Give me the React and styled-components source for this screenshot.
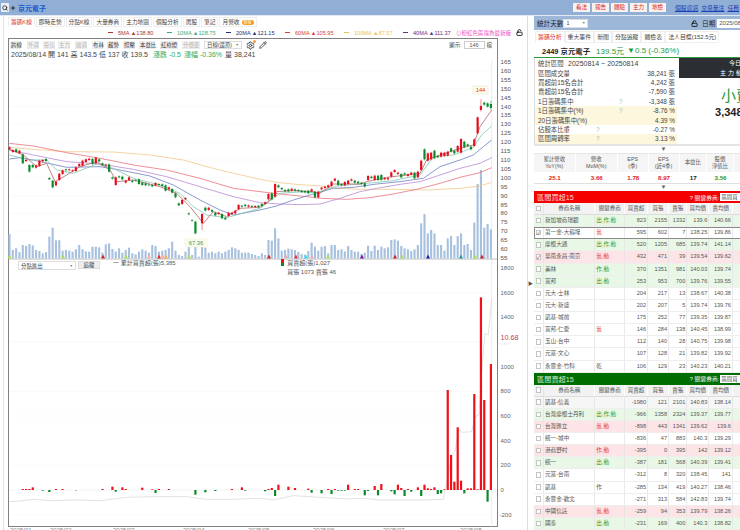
import React from 'react';
import styled, { createGlobalStyle } from 'styled-components';
import { Settings, Pencil, LockOpen, Search, Plus } from 'lucide-react';

const GlobalStyle = createGlobalStyle`
  html, body {
    margin: 0;
    padding: 0;
    background: #fff;
    overflow: hidden;
  }
  #root {
    width: 740px;
    height: 530px;
    overflow: hidden;
    font-family: "Liberation Sans", "Noto Sans CJK TC", sans-serif;
    color: #333;
  }
`;

const Page = styled.div`
  width: 740px;
  height: 530px;
  display: flex;
  flex-direction: column;
  overflow: hidden;
`;

const TopBar = styled.div`
  flex: 0 0 15px;
  height: 15px;
  background: #91aed4;
  border-bottom: 1px solid #dfe8f3;
  display: flex;
  align-items: center;
`;
const SearchBox = styled.div`
  width: 8px;
  height: 9px;
  margin-left: 1px;
  background: #e9eef6;
  color: #222;
  display: flex;
  align-items: center;
  justify-content: center;
`;
const PlusMark = styled.div`
  width: 6px;
  margin-left: 1px;
  display: flex;
  color: #111;
`;
const StockTitle = styled.div`
  margin-left: 2px;
  font-size: 7px;
  font-weight: bold;
  color: #1558d0;
`;
const TopActions = styled.div`
  margin-left: auto;
  width: 167px;
  display: flex;
  align-items: center;
  flex-shrink: 0;
`;
const RedButton = styled.div`
  width: 17px;
  height: 9px;
  margin-right: 2px;
  background: #f6f3ef;
  color: #d22;
  font-size: 5.6px;
  line-height: 9px;
  text-align: center;
`;
const TopLink = styled.a`
  margin-left: ${props => props.$gap}px;
  color: #1a3fb8;
  font-size: 5.8px;
  text-decoration: underline;
  white-space: nowrap;
`;

const Body = styled.div`
  flex: 1;
  display: flex;
  min-height: 0;
`;

const LeftPane = styled.div`
  flex: 0 0 527px;
  width: 527px;
  position: relative;
  display: flex;
  flex-direction: column;
  padding-left: 8px;
  box-sizing: border-box;
  &:before {
    content: '';
    position: absolute;
    left: 3px;
    top: 0;
    bottom: 0;
    width: 1px;
    background: #e2e2e2;
  }
`;
const TabRow = styled.div`
  height: 10px;
  margin-top: 1px;
  display: flex;
  align-items: stretch;
  gap: 1px;
`;
const Tab = styled.div`
  padding: 0 ${props => props.$pad ?? 2}px;
  font-size: 5.7px;
  line-height: 10px;
  color: ${props => (props.$active ? '#e03030' : '#444')};
  border: 1px solid #eee;
  border-bottom-color: ${props => (props.$active ? '#fff' : '#eee')};
  white-space: nowrap;
  display: flex;
  align-items: center;
  gap: 2px;
  box-sizing: border-box;
`;
const NewBadge = styled.span`
  background: #f39a1e;
  color: #fff;
  font-size: 4px;
  line-height: 5px;
  padding: 0 2px;
  border-radius: 3px;
`;
const LegendRow = styled.div`
  height: 11px;
  display: flex;
  align-items: center;
  padding-left: 100px;
  width: 515px;
  box-sizing: border-box;
`;
const MaItem = styled.div`
  width: 59px;
  flex-shrink: 0;
  font-size: 5.6px;
  color: ${props => props.$color};
  display: flex;
  align-items: center;
  white-space: nowrap;
`;
const MaDash = styled.span`
  width: 5px;
  height: 1px;
  margin-right: 5px;
  background: ${props => props.$color};
`;
const PinkNote = styled.div`
  margin-left: -6px;
  font-size: 5.5px;
  color: #ec4fc0;
  white-space: nowrap;
`;
const LockIcon = styled.div`
  margin-left: 5px;
  color: #111;
  display: flex;
`;
const ChartFrame = styled.div`
  position: relative;
  width: 490px;
  height: 489px;
  box-sizing: border-box;
  border: 1px solid #808080;
  display: flex;
  flex-direction: column;
`;
const ChartTools = styled.div`
  height: 10px;
  display: flex;
  align-items: center;
  gap: 4px;
  padding-left: 1px;
  padding-right: 5px;
  margin-top: 1px;
`;
const ToolBtn = styled.div`
  width: ${props => props.$w}px;
  height: 8px;
  flex-shrink: 0;
  margin-left: ${props => props.$m}px;
  background: #f5f5f5;
  border: 1px solid #ececec;
  box-sizing: border-box;
  color: ${props => (props.$off ? '#b0b0b0' : '#333')};
  font-size: 5.4px;
  line-height: 6px;
  text-align: center;
  white-space: nowrap;
`;
const FakeSelect = styled.div`
  width: ${props => props.$w}px;
  height: ${props => props.$h ?? 8}px;
  flex-shrink: 0;
  background: #fff;
  border: 1px solid #ddd;
  box-sizing: border-box;
  color: #444;
  font-size: 5.4px;
  display: flex;
  align-items: center;
  justify-content: space-between;
  padding: 0 2px;
  white-space: nowrap;
`;
const Caret = styled.span`
  font-size: 3.5px;
  color: #777;
`;
const ToolIcon = styled.div`
  display: flex;
  flex-shrink: 0;
  margin-left: ${props => props.$gap ?? 0}px;
  color: #444;
`;
const GearIcon = styled(ToolIcon)`
  position: relative;
  &:after {
    content: '';
    position: absolute;
    right: -1px;
    top: -1px;
    width: 3px;
    height: 3px;
    border-radius: 50%;
    background: #f2a33a;
  }
`;
const ShowCount = styled.div`
  margin-left: auto;
  display: flex;
  align-items: center;
  gap: 2px;
  font-size: 5.4px;
  color: #444;
`;
const CountBox = styled.div`
  width: 21px;
  height: 8px;
  border: 1px solid #ccc;
  box-sizing: border-box;
  text-align: center;
  line-height: 6px;
  font-size: 5.4px;
  color: #555;
`;
const InfoLine = styled.div`
  height: 10px;
  padding-left: 2px;
  font-size: 7px;
  line-height: 10px;
  white-space: nowrap;
  color: #444;
  display: flex;
  gap: 3px;
`;
const Up = styled.span`
  color: #2faa5a;
`;
const ChartBody = styled.div`
  position: relative;
  flex: 1;
  min-height: 0;
`;
const ChartSvg = styled.svg`
  display: block;
  overflow: visible;
  position: absolute;
  left: 0;
  top: 0;
`;
const SubBar = styled.div`
  position: absolute;
  left: 9px;
  top: 201px;
  display: flex;
  align-items: flex-start;
  gap: 2px;
`;
const SubButton = styled.div`
  width: 22px;
  height: 8px;
  background: #eee;
  border: 1px solid #ddd;
  box-sizing: border-box;
  font-size: 5.4px;
  line-height: 6px;
  text-align: center;
  color: #333;
`;
const SubLegend = styled.div`
  margin-left: ${props => props.$gap}px;
  margin-top: -2px;
  font-size: 6px;
  line-height: 8.5px;
  color: #555;
  white-space: nowrap;
`;
const LegendLine = styled.div`
  margin-left: 6.5px;
`;
const LegendMark = styled.span`
  display: inline-block;
  width: 3px;
  height: 7px;
  margin-right: 3.5px;
  vertical-align: -1px;
  background: linear-gradient(#e11 0 55%, #0a8a2a 55% 100%);
`;
const DateStrip = styled.div`
  height: 3px;
  overflow: hidden;
  display: flex;
  padding-left: 2px;
`;
const DateLabel = styled.span`
  flex: 0 0 ${props => props.$w}px;
  font-size: 6px;
  line-height: 6px;
  color: #888;
`;

const Splitter = styled.div`
  flex: 0 0 5px;
  border-left: 1px solid #ddd;
  box-sizing: border-box;
  padding-top: 264px;
  font-size: 5px;
  line-height: 6px;
  color: #555;
`;

const RightPane = styled.div`
  flex: 0 0 260px;
  width: 260px;
  display: flex;
  flex-direction: column;
  margin-left: 1px;
`;
const ControlBar = styled.div`
  height: 14px;
  background: #9db7d9;
  display: flex;
  align-items: center;
  padding-left: 3px;
  font-size: 6.6px;
  color: #223;
`;
const DateInput = styled.div`
  width: 34px;
  height: 9px;
  margin-left: 2px;
  background: #fff;
  font-size: 6px;
  line-height: 9px;
  padding-left: 2px;
  color: #555;
  white-space: nowrap;
`;
const RightTabs = styled.div`
  height: 12px;
  margin-top: 1px;
  display: flex;
  padding-left: 1px;
`;
const RightTab = styled.div`
  padding: 0 2px;
  font-size: 5.9px;
  line-height: 11px;
  color: ${props => (props.$active ? '#e03030' : '#444')};
  border: 1px solid #eee;
  border-bottom-color: ${props => (props.$active ? '#fff' : '#eee')};
  white-space: nowrap;
`;
const StockHead = styled.div`
  height: 14px;
  padding-left: 8px;
  display: flex;
  align-items: center;
  border-bottom: 1px solid #2c9a3a;
  font-size: 7.4px;
  white-space: nowrap;
`;
const StockName = styled.span`
  font-weight: bold;
  color: #222;
  margin-right: 6px;
`;
const StockPrice = styled.span`
  color: #1d9a3c;
  font-size: 8px;
  margin-right: 3px;
`;
const StatsWrap = styled.div`
  display: flex;
  height: 86px;
  border-bottom: 2px solid #e4e4e4;
`;
const StatsTable = styled.div`
  width: 143px;
  flex-shrink: 0;
  padding-top: 1px;
  border-left: 1px solid #ddd;
  box-sizing: border-box;
`;
const StatRow = styled.div`
  height: 9.4px;
  display: flex;
  align-items: center;
  padding: 0 2px 0 3px;
  font-size: 6.4px;
  color: #444;
  white-space: nowrap;
  background: ${props => (props.$hi ? '#fdf7dd' : 'transparent')};
`;
const StatLabel = styled.span`
  flex: 0 0 ${props => props.$w}px;
`;
const StatDate = styled.span`
  font-size: 7px;
`;
const Help = styled.span`
  color: #9bb;
`;
const StatValue = styled.span`
  margin-left: auto;
`;
const SideSummary = styled.div`
  margin-left: 2px;
  flex: 1;
  display: flex;
  flex-direction: column;
`;
const SideHead = styled.div`
  height: 20px;
  background: #2b2f33;
  color: #fff;
  font-size: 6px;
  line-height: 10px;
  white-space: nowrap;
  padding-left: 41px;
`;
const SideHeadTop = styled.div`
  padding-left: 9px;
`;
const SideHeadBottom = styled.div`
  letter-spacing: 2px;
`;
const BigWord = styled.div`
  margin-top: 9px;
  padding-left: 42px;
  font-size: 15px;
  line-height: 17px;
  color: #1d9a3c;
  white-space: nowrap;
`;
const BigNum = styled.div`
  margin-top: 1px;
  padding-left: 36px;
  font-size: 11px;
  font-weight: bold;
  line-height: 14px;
  color: #222;
  white-space: nowrap;
`;
const ArrowRow = styled.div`
  height: 6px;
  margin-bottom: 1px;
  text-align: center;
  font-size: 6px;
  line-height: 6px;
  color: #666;
  width: 259px;
`;
const MetricsTable = styled.div`
  display: grid;
  grid-template-columns: 41.5px 42.5px 30.5px 31px 27.5px 27px 40px;
  grid-template-rows: 19px 11px;
  border-bottom: 1px solid #e0e0e0;
  width: 240px;
`;
const MetricHead = styled.div`
  background: #f5f5f5;
  border-right: 1px solid #fff;
  border-top: 1px solid #e6e6e6;
  font-size: 5.4px;
  line-height: 7.5px;
  color: #555;
  text-align: center;
  display: flex;
  align-items: center;
  justify-content: center;
`;
const MetricValue = styled.div`
  font-size: 6.2px;
  font-weight: bold;
  line-height: 11px;
  text-align: center;
  color: ${props => props.$color};
`;
const Section = styled.div`
  width: 240px;
`;
const SectionBar = styled.div`
  height: 12px;
  background: ${props => props.$bg};
  color: ${props => props.$fg};
  display: flex;
  align-items: center;
  padding-left: 3px;
  font-size: 7.2px;
`;
const SectionSide = styled.div`
  margin-left: 116px;
  display: flex;
  align-items: center;
  font-size: 5.8px;
  color: #f5f5f5;
  white-space: nowrap;
`;
const SmallPick = styled.div`
  margin-left: 1px;
  background: #fff;
  color: #555;
  width: 32px;
  height: 8px;
  line-height: 8px;
  padding-left: 1px;
  font-size: 5.4px;
`;
const gridCols = '10px 51.3px 29.7px 23px 21px 18.3px 22px 23.7px 41px';
const HeadRow = styled.div`
  height: 12px;
  display: grid;
  grid-template-columns: ${gridCols};
  background: #f2f2f2;
  border-bottom: 1px solid #ddd;
  box-sizing: border-box;
`;
const HeadCell = styled.div`
  font-size: 5.5px;
  line-height: 11px;
  color: #555;
  text-align: center;
  border-right: 1px solid #fff;
  white-space: nowrap;
  overflow: hidden;
  display: flex;
  align-items: center;
  justify-content: center;
`;
const DataRow = styled.div`
  height: 12.13px;
  display: grid;
  grid-template-columns: ${gridCols};
  box-sizing: border-box;
  border-bottom: 1px solid #eee;
  background: ${props => ({ g: '#e9f8e6', r: '#fde4e6', s: '#f6f6f6', w: '#fff' }[props.$tone])};
  outline: ${props => (props.$picked ? '1px solid #8a8a8a' : 'none')};
  outline-offset: -1px;
`;
const Cell = styled.div`
  font-size: 5.6px;
  line-height: 11px;
  color: ${props => props.$color || '#555'};
  text-align: ${props => props.$align || 'right'};
  padding: 0 1px;
  white-space: nowrap;
  overflow: hidden;
  border-right: 1px solid rgba(225, 225, 225, 0.7);
`;
const BoxCell = styled.div`
  display: flex;
  align-items: center;
  justify-content: center;
  border-right: 1px solid rgba(225, 225, 225, 0.7);
`;
const Check = styled.div`
  width: 5.5px;
  height: 5.5px;
  background: #fff;
  border: 1px solid #c4c4c4;
  box-sizing: border-box;
  font-size: 5px;
  line-height: 4px;
  color: #333;
  text-align: center;
`;

// chart data, y values read off the reference at 3x
const candles = [
  [262,268,'r'],[270,276,'r'],[268,276,'g'],[272,280,'r'],[283,310,'g'],[300,303,'r'],[315,335,'g'],[315,322,'g'],[316,323,'r'],[302,318,'r'],
  [300,304,'r'],[297,303,'g'],[354,358,'g'],[362,382,'g'],[365,376,'r'],[341,360,'r'],[331,342,'r'],[328,331,'g'],[328,331,'r'],[331,334,'r'],
  [322,333,'r'],[312,318,'r'],[302,317,'r'],[298,306,'r'],[296,300,'r'],[297,312,'g'],[293,310,'r'],[298,304,'g'],[310,315,'g'],[314,317,'r'],
  [313,335,'g'],[352,356,'g'],[352,375,'r'],[349,352,'g'],[350,358,'g'],[362,368,'r'],[352,360,'r'],[362,366,'g'],[360,362,'g'],[358,372,'g'],
  [368,375,'g'],[370,376,'g'],[374,376,'g'],[375,379,'g'],[369,376,'r'],[372,375,'g'],[373,378,'g'],[376,392,'g'],[382,388,'r'],[387,398,'g'],
  [400,412,'g'],[430,436,'g'],[420,432,'r'],[414,418,'r'],[460,463,'g'],[480,482,'g'],[485,520,'g'],null,[462,490,'r',460,510],[443,452,'g'],
  [443,450,'r'],[450,455,'g'],[458,466,'g'],[458,462,'r'],[462,475,'g'],[474,478,'g'],[458,468,'r'],[458,462,'r'],[452,460,'r'],[435,448,'r'],
  [437,440,'g'],[434,438,'g'],[436,440,'r'],[438,441,'g'],[438,441,'r'],[437,441,'g'],[432,438,'g'],[427,432,'r'],[402,418,'r'],[400,418,'g'],
  [372,410,'r'],[376,382,'g'],[384,388,'g'],[390,394,'g'],[388,394,'g'],[386,392,'r'],[388,392,'g'],[390,393,'g'],[392,396,'g'],[393,397,'g'],
  [392,400,'g'],[388,394,'r'],[395,412,'g'],[395,412,'r'],[383,388,'r'],[380,384,'r'],[376,382,'r'],[365,378,'r'],[356,362,'r'],[362,375,'g'],
  [372,376,'g'],[366,376,'r'],[362,372,'r'],[358,362,'r'],[362,368,'g'],[365,370,'g'],[368,372,'g'],[370,380,'g'],[348,360,'r'],[350,354,'g'],
  [347,360,'r'],[347,360,'g'],[345,360,'g'],[354,358,'r'],[354,358,'r'],[337,350,'r'],[330,336,'r'],[338,342,'r'],[342,352,'g'],[340,344,'g'],
  [343,348,'r'],[338,344,'r'],[338,355,'g'],[335,352,'r'],[302,330,'r'],[268,298,'g'],[280,302,'r'],[278,298,'r'],[272,295,'g'],[288,292,'g'],
  [278,290,'r'],[278,288,'r'],[275,287,'r'],[265,275,'g'],[272,280,'g'],[258,275,'r'],[237,278,'r'],[245,262,'g'],[253,258,'g'],[260,268,'g'],
  [238,258,'r'],[172,220,'r'],[138,150,'r',118,155],[128,134,'g'],[130,140,'g'],[132,144,'g',122,150],
];
const volumes = [
  522,570,565,576,555,558,552,556,570,573,580,576,530,503,541,541,572,570,572,575,
  568,555,568,574,575,560,560,562,578,553,550,567,574,565,578,570,563,580,583,575,
  568,572,578,555,558,575,572,570,565,545,572,585,588,575,550,585,545,590,560,563,
  578,575,580,575,580,575,570,562,565,570,578,578,578,582,585,588,580,585,540,542,
  505,535,572,570,566,568,570,576,582,584,573,548,560,572,560,558,580,555,555,570,
  568,574,558,570,575,575,582,578,557,573,557,570,560,565,562,540,538,542,558,565,
  568,573,568,555,490,462,520,510,520,555,555,572,535,528,555,528,520,555,552,570,
  488,372,330,503,492,508,
];
// [index, height in 3x px]; negative goes under the zero line
const netBars = [
  [4,3],[5,3],[6,3],[7,8],[10,-2],[12,-6],[14,3],[16,3],[20,-1],[28,3],[31,10],[32,-5],[34,8],[35,3],[40,7],[43,2],[44,-9],[45,3],[48,3],
  [56,-14],[59,-7],[62,-3],[67,3],[70,8],[71,-2],[77,-4],[78,3],[79,6],[80,-18],[81,16],[84,10],[86,6],[90,4],[91,-8],[94,-10],[96,3],[97,-12],
  [98,3],[99,-2],[100,-2],[101,-2],[102,16],[104,3],[105,3],[107,-16],[108,-3],[110,12],[111,-16],[112,18],[115,-4],[116,-13],[117,16],[118,6],
  [119,-18],[120,3],[121,-5],[123,8],[124,-18],[125,16],[126,5],[127,3],[128,8],[129,-12],[130,-10],[131,2],[132,300],[133,105],[134,25],[135,188],
  [136,28],[137,-10],[138,5],[139,5],[140,288],[141,2],[142,578],[143,270],[144,-35],[145,378],
];
const maLines = [
  { color: '#f3c98a', a: [[28,262],[100,268],[200,275],[340,276],[450,285],[550,300],[650,328],[780,358]], b: [[60,368],[120,374],[185,378],[230,385],[300,388],[400,388],[500,390],[600,385],[660,378],[695,367]] },
  { color: '#e8747c', a: [[28,250],[100,258],[200,278],[300,295],[400,315],[500,330],[600,355],[700,385],[780,395]], b: [[60,402],[120,408],[185,415],[260,418],[330,413],[400,402],[470,388],[540,370],[600,352],[660,338],[695,323]] },
  { color: '#b98ad6', a: [[28,270],[100,285],[200,305],[300,312],[400,328],[500,350],[600,380],[700,410],[780,428]], b: [[60,432],[120,434],[180,432],[240,415],[300,395],[350,385],[420,373],[480,365],[540,345],[600,325],[660,310],[695,293]] },
  { color: '#6f80c4', a: [[28,297],[60,293],[100,300],[200,322],[300,320],[360,330],[450,348],[520,375],[600,420],[660,450],[700,465],[780,450]], b: [[50,438],[100,420],[150,405],[220,385],[280,382],[350,372],[420,365],[490,355],[540,320],[600,300],[640,285],[670,260],[695,240]] },
  { color: '#7fc8b4', a: [[28,285],[90,300],[140,300],[170,330],[220,340],[290,312],[340,325],[400,355],[480,375],[540,400],[580,440],[620,465],[680,473],[780,445]], b: [[60,400],[120,396],[170,398],[230,378],[300,372],[400,362],[480,345],[520,290],[580,285],[640,262],[665,225],[695,198]] },
  { color: '#b5656a', a: [[28,268],[70,285],[110,320],[140,310],[165,365],[200,345],[240,320],[290,305],[330,330],[350,365],[400,360],[480,380],[530,400],[570,440],[610,490],[640,455],[680,470],[720,445],[780,442]], b: [[30,420],[50,395],[100,392],[160,395],[180,400],[220,372],[300,372],[320,365],[380,352],[440,345],[480,340],[500,300],[540,285],[600,265],[640,255],[660,200],[695,150]] },
];
const cumA = [[28,740],[60,738],[100,733],[150,737],[230,735],[300,737],[380,727],[460,725],[560,725],[620,733],[700,733],[780,730]];
const cumB = [[40,735],[100,722],[180,727],[260,732],[310,730],[360,735],[480,735],[550,733],[556,700],[565,660],[575,600],[585,590],[597,520],[605,532],[635,530],[645,485],[657,480],[665,350],[675,235],[685,240],[695,130]];
const markers = [
  [9.5,'#a7e05a'],[63,'#a7e05a'],[103,'#c22'],[126,'#a7e05a'],[149,'#f7b0a8'],[159,'#d33'],[163,'#f7b0a8'],[166,'#f4b050'],[189,'#a7e05a'],
  [269,'#c22'],[286,'#f7a8a8'],[296,'#e33'],[306,'#3de0e8'],[312,'#f7a8a8'],[328,'#a7e05a'],[362,'#7a1a9a'],[395,'#c22'],[402,'#a7e05a'],
  [428,'#1a1aa0'],[461,'#1a9a9a'],[475,'#a7e05a'],[482,'#c22'],
];
const priceTicks = [165,160,155,150,145,140,135,130,125,120,115,110,105,100,95,90,85,80,75,70,65,60,55];
const subTicks = [1800,1600,1400,1000,800,600,400,200,0,-200];
const dates = [['2025/01', 40], ['2025/02', 63], ['2025/03', 70], ['2025/04', 65], ['2025/05', 65], ['2025/06', 70], ['2025/07', 77], ['2025/08', 40]];

const barX = i => 9.5 + 3.32 * i;
const priceY = p => 258 - (p - 55) * 1.782;
const subY = v => 490 - v * 0.1233;
const toLine = (pts, ox, oy) => pts.map(([x, y]) => `${ox + x / 3},${oy + y / 3}`).join(' ');
const maPoints = m => `${toLine(m.a, 0, 60)} ${toLine(m.b, 260, 60)}`;

const MA_LEGEND = [
  ['#a33', '5MA', '138.80'],
  ['#3aaa7a', '10MA', '128.75'],
  ['#23307a', '20MA', '121.15'],
  ['#e03a3a', '60MA', '105.95'],
  ['#e8c060', '100MA', '87.57'],
  ['#6a2a8a', '40MA', '111.37'],
];
// [label, width, extra left margin, greyed out]
const TOOLS = [
  ['跨線', 11, 0], ['外資', 12, 2, 1], ['投信', 12, 0, 1], ['主力', 12, -1, 1], ['融資', 12, 1, 1], ['布林', 11, 1], ['趨勢', 11, 0], ['撐壓', 12, 1],
  ['本益比', 16, 0], ['紅綠燈', 18, 1], ['分價量', 18, 0, 1],
];
const STATS = [
  ['區間成交量', 60, null, '38,241 張', false],
  ['買超前15名合計', 60, null, '4,242 張', false],
  ['賣超前15名合計', 60, null, '-7,590 張', false],
  ['1日籌碼集中', 81, '?', '-3,348 張', false],
  ['1日籌碼集中(%)', 81, '?', '-8.76 %', true],
  ['20日籌碼集中(%)', 81, null, '4.39 %', true],
  ['佔股本比重', 58, '?', '-0.27 %', false],
  ['區間周轉率', 58, '?', '3.13 %', true],
];
const METRICS = [
  [['累計營收', 'YoY(%)'], '25.1', '#e0202a'],
  [['營收', 'MoM(%)'], '3.66', '#e0202a'],
  [['EPS', '(季)'], '1.78', '#e0202a'],
  [['EPS', '(近4季)'], '8.97', '#e0202a'],
  [['本益比'], '17', '#222'],
  [['股價', '淨值比'], '3.56', '#1d9a3c'],
  [['殖利', '率(%)'], '', '#222'],
];
const HEADS = ['券商名稱', '關鍵券商', '買賣超', '買張', '賣張', '買均價', '賣均價', '交'];
const GREEN = '#1d9a3c';
const RED = '#e0303a';
const BUY_ROWS = [
  ['新加坡商瑞銀', '出,作,動', GREEN, 823, 2155, 1332, 139.6, 140.66, 'g'],
  ['第一金-大稻埕', '氪', RED, 595, 602, 7, 138.25, 139.86, 'w', true],
  ['摩根大通', '出,作,動', GREEN, 520, 1205, 685, 139.74, 141.14, 'g'],
  ['華南永昌-南京', '氪,動', RED, 432, 471, 39, 139.54, 139.62, 'r', false, true],
  ['美林', '作,動', GREEN, 370, 1351, 981, 140.03, 139.74, 'g'],
  ['富邦', '出,動', GREEN, 253, 953, 700, 139.76, 139.55, 'g'],
  ['元大-士林', '', GREEN, 204, 217, 13, 138.67, 140.38, 'w'],
  ['元大-新盛', '', GREEN, 202, 207, 5, 139.74, 139.76, 'w'],
  ['凱基-城前', '', GREEN, 175, 252, 77, 139.35, 139.87, 'w'],
  ['富邦-仁愛', '氪', RED, 146, 284, 138, 140.45, 138.99, 'w'],
  ['玉山-台中', '', GREEN, 112, 140, 28, 140.75, 139.98, 'w'],
  ['元富-文心', '', GREEN, 107, 128, 21, 139.82, 139.92, 'w'],
  ['永豐金-竹科', '乾', '#555', 106, 129, 23, 140.23, 140.21, 'w'],
];
const SELL_ROWS = [
  ['凱基-信義', '', GREEN, -1980, 121, 2101, 140.83, 138.14, 's'],
  ['台灣摩根士丹利', '出,作,動', GREEN, -966, 1358, 2324, 139.37, 139.77, 'g'],
  ['台灣匯立', '氪,動', RED, -898, 443, 1341, 139.62, 139.6, 'r'],
  ['統一-城中', '', GREEN, -836, 47, 883, 140.3, 139.29, 'w'],
  ['港商野村', '作,動', RED, -395, 0, 395, 142, 139.12, 'r'],
  ['統一', '出,動', GREEN, -387, 181, 568, 140.39, 139.41, 'g'],
  ['元富-台南', '', GREEN, -312, 8, 320, 138.45, 141, 'w'],
  ['凱基', '作', '#555', -285, 134, 419, 140.27, 138.46, 'w'],
  ['永豐金-歡北', '', GREEN, -271, 313, 584, 142.83, 139.74, 'w'],
  ['中國信託', '氪,動', RED, -259, 94, 353, 139.79, 138.26, 'r'],
  ['國泰', '出,動', GREEN, -231, 169, 400, 140.3, 138.82, 'g'],
];

const KLineChart = () => (
  <ChartSvg width="530" height="467" viewBox="9 60 530 467">
    {priceTicks.filter(p => p % 10 === 0).map(p => (
      <line key={p} x1="9" x2="491" y1={priceY(p)} y2={priceY(p)} stroke="#f6f6f6" strokeWidth="0.6" />
    ))}
    {[1600, 1200, 800, 600, 200, -200].map(v => (
      <line key={v} x1="9" x2="491" y1={subY(v)} y2={subY(v)} stroke="#f7f7f7" strokeWidth="0.6" />
    ))}
    <line x1="491.7" x2="491.7" y1="60" y2="527" stroke="#dedede" strokeWidth="0.6" />
    <line x1="9" x2="497" y1="259" y2="259" stroke="#aaa" strokeWidth="0.8" />
    {priceTicks.map(p => (
      <text key={p} x="500.5" y={priceY(p) + 2} fontSize="6.2" fill="#555">{p}</text>
    ))}
    {subTicks.map(v => (
      <text key={v} x={v < 0 ? 499.5 : 500.5} y={subY(v) + 2} fontSize="6" fill="#666">{v}</text>
    ))}
    <text x="500.5" y="340" fontSize="7.2" fill="#c2405a">10.68</text>
    <line x1="500" x2="510" y1="344" y2="344" stroke="#bbb" strokeWidth="0.5" strokeDasharray="1 1" />

    {volumes.map((t, i) => (
      <rect key={i} x={barX(i) - 1.05} y={60 + t / 3} width="2.1" height={(595 - t) / 3} fill="#a6c0de" />
    ))}
    {markers.map(([x, c], i) => (
      <polygon key={i} points={`${x - 2},258.6 ${x + 2},258.6 ${x},254.6`} fill={c} />
    ))}
    {maLines.map(m => (
      <polyline key={m.color} points={maPoints(m)} fill="none" stroke={m.color} strokeWidth="0.8" />
    ))}
    {candles.map((c, i) => {
      if (!c) return null;
      const color = c[2] === 'r' ? '#e3101c' : '#0b8a2c';
      const x = barX(i);
      const top = 60 + (c[3] ?? c[0] - 3) / 3;
      const bottom = 60 + (c[4] ?? c[1] + 3) / 3;
      return (
        <g key={i}>
          <line x1={x} x2={x} y1={top} y2={bottom} stroke={color} strokeWidth="0.5" />
          <rect x={x - 1.1} y={60 + c[0] / 3} width="2.2" height={(c[1] - c[0]) / 3} fill={color} />
        </g>
      );
    })}
    <rect x="473" y="86" width="15" height="8" fill="#fffbe8" stroke="#e6e2cc" strokeWidth="0.5" />
    <text x="480.5" y="92.2" fontSize="5.8" fill="#e03a30" textAnchor="middle">144</text>
    <rect x="185" y="239" width="22" height="8" fill="#fbfbea" stroke="#eeeed8" strokeWidth="0.5" />
    <text x="196" y="245.2" fontSize="5.8" fill="#3c9a6a" textAnchor="middle">67.36</text>

    <polyline points={`${toLine(cumA, 0, 255)} ${toLine(cumB, 260, 255)}`} fill="none" stroke="#cfcfcf" strokeWidth="0.6" />
    <line x1="9" x2="491" y1="490" y2="490" stroke="#e4e4e4" strokeWidth="0.5" />
    {netBars.map(([i, h]) => (
      <rect
        key={i}
        x={barX(i) - 1.1}
        y={h > 0 ? 490 - h / 3 : 490}
        width="2.2"
        height={Math.abs(h) / 3}
        fill={h > 0 ? '#f01018' : '#0b8a2c'}
      />
    ))}
  </ChartSvg>
);

const BrokerRow = ({ row }) => {
  const [name, tag, tagColor, net, buy, sell, bAvg, sAvg, tone, picked, checked] = row;
  return (
    <DataRow $tone={tone} $picked={picked}>
      <BoxCell><Check>{picked || checked ? '✓' : ''}</Check></BoxCell>
      <Cell $align="left">{name}</Cell>
      <Cell $align="left" $color={tagColor}>{tag}</Cell>
      <Cell>{net}</Cell>
      <Cell>{buy}</Cell>
      <Cell>{sell}</Cell>
      <Cell>{bAvg}</Cell>
      <Cell>{sAvg}</Cell>
      <Cell />
    </DataRow>
  );
};

const BrokerSection = ({ title, bg, fg, rows }) => (
  <Section>
    <SectionBar $bg={bg} $fg={fg}>
      {title}
      <SectionSide>? 關鍵券商:<SmallPick>區間買</SmallPick></SectionSide>
    </SectionBar>
    <HeadRow>
      <BoxCell><Check /></BoxCell>
      {HEADS.map(h => <HeadCell key={h}>{h}</HeadCell>)}
    </HeadRow>
    {rows.map(r => <BrokerRow key={r[0]} row={r} />)}
  </Section>
);

export default function App() {
  return (
    <Page>
      <GlobalStyle />
      <TopBar>
        <SearchBox><Search size={6} strokeWidth={3} /></SearchBox>
        <PlusMark><Plus size={6} strokeWidth={3} /></PlusMark>
        <StockTitle>京元電子</StockTitle>
        <TopActions>
          {['看法', '報告', '體驗', '主力', '地檢'].map(t => <RedButton key={t}>{t}</RedButton>)}
          <TopLink $gap={7}>個股資訊</TopLink>
          <TopLink $gap={3}>交易量注</TopLink>
          <TopLink $gap={3}>任務</TopLink>
        </TopActions>
      </TopBar>
      <Body>
        <LeftPane>
          <TabRow>
            <Tab $active>籌碼K線</Tab>
            <Tab>即時走勢</Tab>
            <Tab>分點K線</Tab>
            <Tab>大量券商</Tab>
            <Tab>主力地圖</Tab>
            <Tab>個股分析</Tab>
            <Tab>選股</Tab>
            <Tab>筆記</Tab>
            <Tab>月營收<NewBadge>新版</NewBadge></Tab>
          </TabRow>
          <LegendRow>
            {MA_LEGEND.map(([c, n, v]) => (
              <MaItem key={n} $color={c}><MaDash $color={c} />{n} ▲{v}</MaItem>
            ))}
            <PinkNote>⊙粉紅色區塊為最新版</PinkNote>
            <LockIcon><LockOpen size={7} strokeWidth={3} /></LockIcon>
          </LegendRow>
          <ChartFrame>
            <ChartTools>
              {TOOLS.map(([t, w, m, off]) => <ToolBtn key={t} $w={w} $m={m} $off={off}>{t}</ToolBtn>)}
              <FakeSelect $w={38}>日線(還原)<Caret>▼</Caret></FakeSelect>
              <GearIcon><Settings size={9} strokeWidth={2.5} /></GearIcon>
              <ToolIcon><Pencil size={8} strokeWidth={2.6} /></ToolIcon>
              <ShowCount>顯示:<CountBox>146</CountBox>檔</ShowCount>
            </ChartTools>
            <InfoLine>
              <span>2025/08/14 開 141 高 143.5 低 137 收 139.5</span>
              <span>&nbsp;<Up>漲跌 -0.5</Up></span>
              <Up>漲幅 -0.36%</Up>
              <span>量 38,241</span>
            </InfoLine>
            <ChartBody>
              <KLineChart />
              <SubBar>
                <FakeSelect $w={58} $h={9}>分點進出<Caret>▼</Caret></FakeSelect>
                <SubButton>追蹤</SubButton>
                <SubLegend $gap={11}>一 累計買賣超(張)5,385</SubLegend>
                <SubLegend $gap={103}>
                  <LegendMark />買賣超(張)1,027
                  <LegendLine>買張 1073 賣張 46</LegendLine>
                </SubLegend>
              </SubBar>
            </ChartBody>
          </ChartFrame>
          <DateStrip>
            {dates.map(([d, w]) => <DateLabel key={d} $w={w}>{d}</DateLabel>)}
          </DateStrip>
        </LeftPane>
        <Splitter>▶</Splitter>
        <RightPane>
          <ControlBar>
            統計天數
            <FakeSelect $w={25} $h={9}>1<Caret>▼</Caret></FakeSelect>
            <ToolIcon $gap={103}><LockOpen size={7} strokeWidth={3} color="#111" /></ToolIcon>
            &nbsp;&nbsp;日期
            <DateInput>2025/08/14</DateInput>
          </ControlBar>
          <RightTabs>
            <RightTab $active>籌碼分析</RightTab>
            <RightTab>重大事件</RightTab>
            <RightTab>新聞</RightTab>
            <RightTab>分點追蹤</RightTab>
            <RightTab>體檢表</RightTab>
            <RightTab>法人目標(152.5元)</RightTab>
          </RightTabs>
          <StockHead>
            <StockName>2449 京元電子</StockName>
            <StockPrice>139.5元</StockPrice>
            <StockPrice>▼0.5 (-0.36%)</StockPrice>
          </StockHead>
          <StatsWrap>
            <StatsTable>
              <StatRow>
                <StatLabel $w={30}>統計區間</StatLabel>
                <StatDate>20250814 ~ 20250814</StatDate>
              </StatRow>
              {STATS.map(([label, w, help, value, hi]) => (
                <StatRow key={label} $hi={hi}>
                  <StatLabel $w={w}>{label}</StatLabel>
                  {help && <Help>{help}</Help>}
                  <StatValue>{value}</StatValue>
                </StatRow>
              ))}
            </StatsTable>
            <SideSummary>
              <SideHead>
                <SideHeadTop>今日</SideHeadTop>
                <SideHeadBottom>主力動</SideHeadBottom>
              </SideHead>
              <BigWord>小賣</BigWord>
              <BigNum>3,348</BigNum>
            </SideSummary>
          </StatsWrap>
          <ArrowRow>▼</ArrowRow>
          <MetricsTable>
            {METRICS.map(([lines]) => (
              <MetricHead key={lines.join()}>
                <span>{lines.map(l => <div key={l}>{l}</div>)}</span>
              </MetricHead>
            ))}
            {METRICS.map(([lines, v, c]) => (
              <MetricValue key={lines.join()} $color={c}>{v}</MetricValue>
            ))}
          </MetricsTable>
          <ArrowRow>▼</ArrowRow>
          <BrokerSection title="區間買超15" bg="#f40000" fg="#ffd9d0" rows={BUY_ROWS} />
          <BrokerSection title="區間賣超15" bg="#006d00" fg="#d4efd4" rows={SELL_ROWS} />
        </RightPane>
      </Body>
    </Page>
  );
}
